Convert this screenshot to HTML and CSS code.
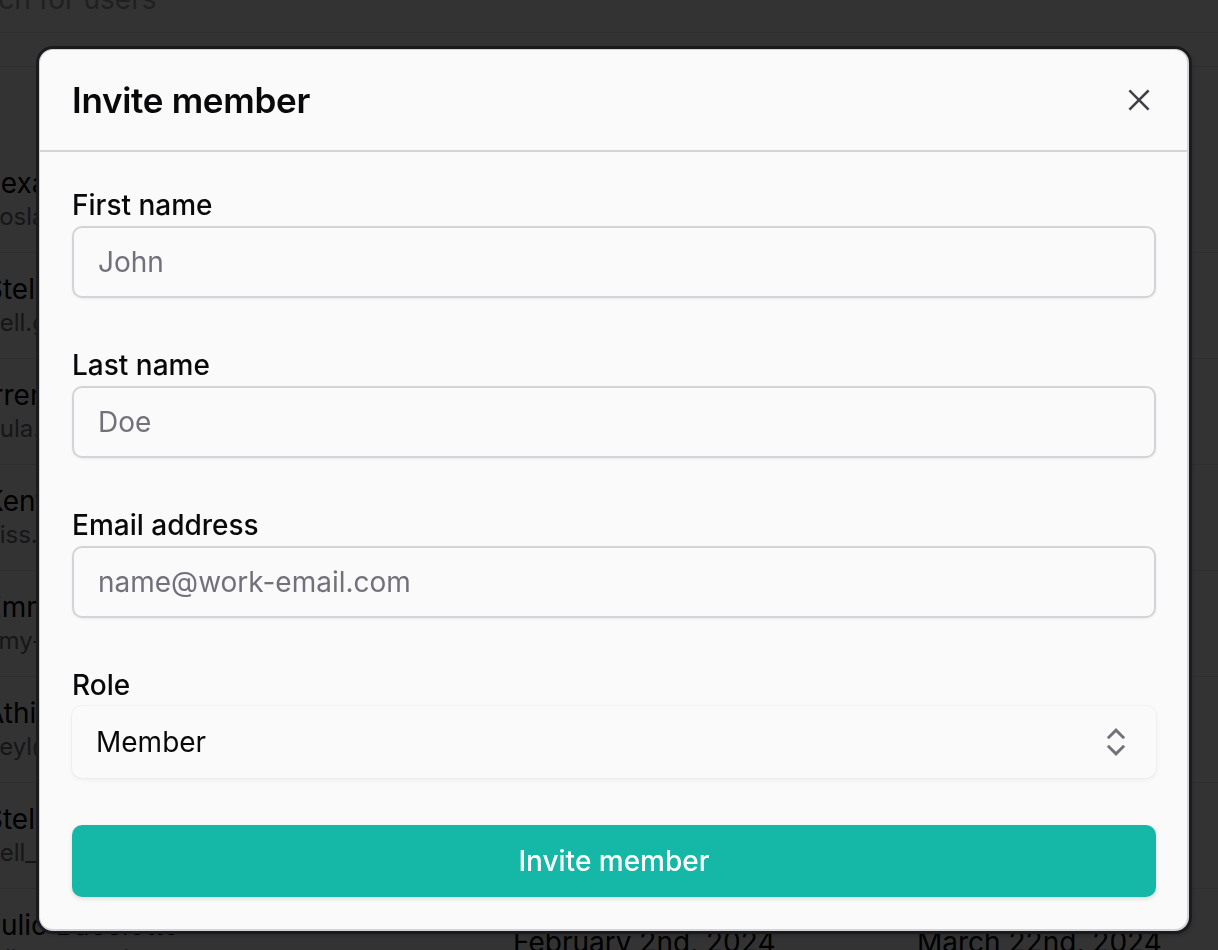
FILE: index.html
```html
<!DOCTYPE html>
<html lang="en">
<head>
<meta charset="utf-8">
<title>Invite member</title>
<link rel="stylesheet" href="styles.css">
</head>
<body>
<div class="page">
  <div class="search"><span class="search-text">Search for users</span></div>
  <div class="toolbar"></div>
  <div class="thead"></div>
  <div class="row">
    <div class="person"><span class="pname">Lexa Rosland</span><span class="pmail">hoslander@acme.io</span></div>
    <div class="date">January 4th, 2024</div><div class="date">March 1st, 2024</div>
  </div>
  <div class="row">
    <div class="person"><span class="pname">Stella Mitchell</span><span class="pmail">bell.green@acme.io</span></div>
    <div class="date">January 9th, 2024</div><div class="date">March 3rd, 2024</div>
  </div>
  <div class="row">
    <div class="person"><span class="pname">Irrena Paul</span><span class="pmail">pula.paul@acme.io</span></div>
    <div class="date">January 12th, 2024</div><div class="date">March 5th, 2024</div>
  </div>
  <div class="row">
    <div class="person"><span class="pname">Kent Moore</span><span class="pmail">biss.moore@acme.io</span></div>
    <div class="date">January 15th, 2024</div><div class="date">March 8th, 2024</div>
  </div>
  <div class="row">
    <div class="person"><span class="pname">Emmy Clarke</span><span class="pmail">amy-clarke@acme.io</span></div>
    <div class="date">January 20th, 2024</div><div class="date">March 11th, 2024</div>
  </div>
  <div class="row">
    <div class="person"><span class="pname">Athina Reyes</span><span class="pmail">heyl@acme.io</span></div>
    <div class="date">January 24th, 2024</div><div class="date">March 15th, 2024</div>
  </div>
  <div class="row">
    <div class="person"><span class="pname">Stella Powell</span><span class="pmail">bell_p@acme.io</span></div>
    <div class="date">January 28th, 2024</div><div class="date">March 19th, 2024</div>
  </div>
  <div class="row">
    <div class="person"><span class="pname">Julio Bacciotto</span><span class="pmail">julio@acme.io</span></div>
    <div class="date">February 2nd, 2024</div><div class="date">March 22nd, 2024</div>
  </div>
</div>

<div class="overlay">
  <div class="modal" role="dialog" aria-labelledby="modal-title">
    <div class="modal-header">
      <h2 class="modal-title" id="modal-title">Invite member</h2>
      <button class="close" type="button" aria-label="Close">
        <svg viewBox="0 0 24 24" width="38" height="38" fill="none" stroke="currentColor" stroke-width="1.6" stroke-linecap="square"><path d="M17.5 6.5 6.5 17.5"/><path d="m6.5 6.5 11 11"/></svg>
      </button>
    </div>
    <form class="modal-body">
      <div class="field">
        <label class="label" for="first">First name</label>
        <input class="input" id="first" type="text" placeholder="John">
      </div>
      <div class="field">
        <label class="label" for="last">Last name</label>
        <input class="input" id="last" type="text" placeholder="Doe">
      </div>
      <div class="field">
        <label class="label" for="email">Email address</label>
        <input class="input" id="email" type="email" placeholder="name@work-email.com">
      </div>
      <div class="field">
        <span class="label">Role</span>
        <div class="select">
          <span>Member</span>
          <svg viewBox="0 0 24 24" width="38" height="38" fill="none" stroke="currentColor" stroke-width="1.8" stroke-linecap="square" stroke-linejoin="miter"><path d="m7.5 15 4.5 4.5 4.5-4.5"/><path d="m7.5 9 4.5-4.5 4.5 4.5"/></svg>
        </div>
      </div>
      <button class="submit" type="button">Invite member</button>
    </form>
  </div>
</div>
</body>
</html>
```
FILE: styles.css
```css
* { box-sizing: border-box; }

html, body {
  margin: 0;
  padding: 0;
  height: 100%;
  overflow: hidden;
}

body {
  background: #ffffff;
  font-family: Inter, "Noto Sans", sans-serif;
  color: #09090b;
}

/* ---------- page behind the dialog ---------- */
.page {
  margin-top: -34px;
}

.search {
  height: 67px;
  border-bottom: 1px solid #e4e4e7;
  display: flex;
  align-items: center;
}

.search-text {
  font-size: 28px;
  color: #a1a1aa;
  margin-left: -62px;
}

.toolbar {
  height: 34px;
  border-bottom: 1px solid #e4e4e7;
}

.thead {
  height: 80px;
}

.row {
  height: 106px;
  border-bottom: 1px solid #e4e4e7;
  display: grid;
  grid-template-columns: 528px 404px 1fr;
  align-items: center;
  margin-left: -15px;
}

.person {
  display: flex;
  flex-direction: column;
}

.pname {
  font-size: 28px;
  line-height: 34px;
  color: #000000;
  white-space: nowrap;
}

.pmail {
  font-size: 24px;
  line-height: 34px;
  color: #71717a;
  white-space: nowrap;
}

.date {
  font-size: 28px;
  color: #000000;
  white-space: nowrap;
}

/* ---------- overlay + dialog ---------- */
.overlay {
  position: fixed;
  inset: 0;
  background: rgba(0, 0, 0, 0.8);
  display: flex;
  align-items: flex-start;
  padding: 49px 0 0 39px;
}

.modal {
  width: 1150px;
  background: #fafafa;
  border: 1px solid #d4d4d8;
  border-right-width: 2px;
  border-bottom-width: 2px;
  border-radius: 14px;
  box-shadow: 0 0 0 3px #1b1b1d, 2px 3px 6px rgba(0, 0, 0, 0.35);
}

.modal-header {
  height: 102px;
  border-bottom: 2px solid #d4d4d8;
  display: flex;
  align-items: center;
  justify-content: space-between;
  padding: 0 29px 0 32px;
}

.modal-title {
  margin: 0;
  font-size: 35px;
  font-weight: 600;
  letter-spacing: -0.3px;
  color: #09090b;
}

.close {
  border: 0;
  background: none;
  padding: 0;
  margin: 0;
  color: #3f3f46;
  display: flex;
  cursor: pointer;
}

.modal-body {
  display: flex;
  flex-direction: column;
  padding: 37px 31px 32px 32px;
  margin: 0;
}

.field {
  display: flex;
  flex-direction: column;
  gap: 5px;
  margin-bottom: 51px;
}

.field:last-of-type {
  margin-bottom: 47px;
}

.label {
  font-size: 28px;
  line-height: 32px;
  font-weight: 500;
  color: #09090b;
}

.input {
  height: 72px;
  width: 100%;
  border: 2px solid #d4d4d8;
  border-radius: 10px;
  background: #fafafa;
  padding: 0 24px;
  font-family: inherit;
  font-size: 28px;
  color: #09090b;
  box-shadow: 0 1px 3px rgba(0, 0, 0, 0.06);
  outline: none;
}

.input::placeholder {
  color: #71717a;
}

.select {
  height: 72px;
  border-radius: 10px;
  background: #fafafa;
  display: flex;
  align-items: center;
  justify-content: space-between;
  padding: 0 21px 0 24px;
  font-size: 28px;
  color: #09090b;
  box-shadow: 0 0 0 1px rgba(0, 0, 0, 0.025), 0 2px 5px rgba(0, 0, 0, 0.05);
}

.select svg {
  color: #71717a;
}

.submit {
  height: 72px;
  border: 0;
  border-radius: 10px;
  background: #15b8a6;
  color: #ffffff;
  font-family: inherit;
  font-size: 28px;
  font-weight: 500;
  box-shadow: 0 2px 4px rgba(0, 0, 0, 0.12);
  cursor: pointer;
}
```
